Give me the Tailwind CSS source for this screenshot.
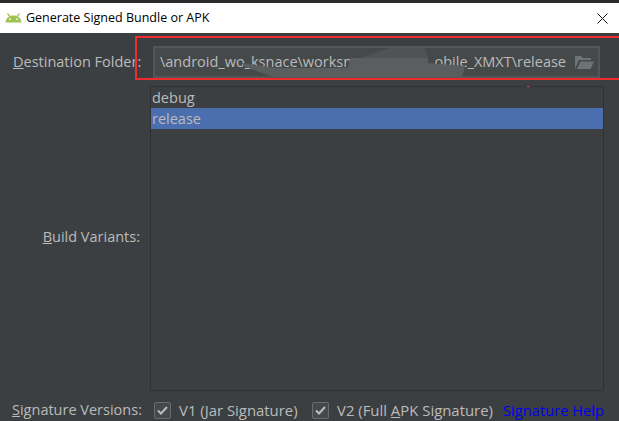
<!DOCTYPE html>
<html lang="en">
<head>
    <meta charset="UTF-8">
    <title>Generate Signed Bundle or APK</title>
    <script src="https://cdn.jsdelivr.net/npm/@tailwindcss/browser@4"></script>
</head>
<body class="w-[619px] h-[421px] overflow-hidden bg-[#3c3f41] font-['Open_Sans','Noto_Sans',sans-serif] text-[14.5px] text-[#bbbbbb]">
<div class="h-[3px] bg-[#2b2b2b]"></div>

<!-- title bar -->
<div class="h-[30px] bg-white flex items-center pl-[5px] pr-[11px] text-black text-[12.5px]">
    <svg width="17" height="10" viewBox="0 0 17 10" class="mr-[4px]">
        <path d="M0.5 9.5 C1 5 4 2.5 8.5 2.5 C13 2.5 16 5 16.5 9.5 Z" fill="#9fc353"/>
        <path d="M2.5 0.5 L5 3.5 M14.5 0.5 L12 3.5" stroke="#9fc353" stroke-width="1.2"/>
        <circle cx="5" cy="6.2" r="0.9" fill="#fff"/>
        <circle cx="12" cy="6.2" r="0.9" fill="#fff"/>
    </svg>
    <span>Generate Signed Bundle or APK</span>
    <svg width="11" height="11" viewBox="0 0 11 11" class="ml-auto">
        <path d="M0.5 0.5 L10.5 10.5 M10.5 0.5 L0.5 10.5" stroke="#111" stroke-width="1"/>
    </svg>
</div>

<div class="relative">
    <!-- destination row -->
    <div class="flex items-center h-[53px] pt-[5px] pl-[13px]">
        <label class="w-[127px] mr-[13px] shrink-0 text-right whitespace-nowrap pb-[1px]"><span class="underline">D</span>estination Folder:</label>
        <div class="w-[447px] h-[32px] bg-[#45494a] border-2 border-[#525657] flex items-center pl-[5px] pr-[4px] whitespace-nowrap">
            <span>\android_wo_ksnace\worksn</span>
            <span class="ml-auto">obile_XMXT\release</span>
            <svg width="20" height="15" viewBox="0 0 20 15" class="ml-[8px] shrink-0">
                <path d="M1 14 V1 H7 L9 3 H17 V5 H5 L1 14 Z" fill="#6e7374"/>
                <path d="M3 14 L6.5 6.5 H20 L16.5 14 Z" fill="#6e7374"/>
            </svg>
        </div>
    </div>

    <!-- build variants -->
    <div class="flex h-[305px] pl-[13px]">
        <label class="w-[127px] mr-[10px] shrink-0 self-center text-right pb-[3px]"><span class="underline">B</span>uild Variants:</label>
        <div class="w-[454px] border border-[#2f3132]">
            <div class="h-[21px] leading-[21px] pl-[1px]">debug</div>
            <div class="h-[21px] leading-[21px] pl-[1px] bg-[#4b6eaf]">release</div>
        </div>
    </div>

    <!-- signature row -->
    <div class="flex items-center h-[38px] pl-[12px] whitespace-nowrap">
        <span class="w-[142px] shrink-0"><span class="underline">S</span>ignature Versions:</span>
        <span class="w-[17px] h-[17px] flex items-center justify-center bg-[#45494a] border border-[#6b6b6b] rounded-[2px] mr-[8px]">
            <svg width="11" height="9" viewBox="0 0 11 9"><path d="M1 4.5 L4 7.5 L10 1" fill="none" stroke="#bbbbbb" stroke-width="2"/></svg>
        </span>
        <span class="w-[133px] shrink-0 text-[14.9px]">V1 (<span class="underline">J</span>ar Signature)</span>
        <span class="w-[17px] h-[17px] flex items-center justify-center bg-[#45494a] border border-[#6b6b6b] rounded-[2px] mr-[8px]">
            <svg width="11" height="9" viewBox="0 0 11 9"><path d="M1 4.5 L4 7.5 L10 1" fill="none" stroke="#bbbbbb" stroke-width="2"/></svg>
        </span>
        <span class="w-[166px] shrink-0 text-[14.9px]">V2 (Full <span class="underline">A</span>PK Signature)</span>
        <a class="text-[#0000ee] text-[14.7px]">Signature Help</a>
    </div>

    <!-- annotation over the screenshot -->
    <div class="absolute left-[135px] top-[3px] w-[500px] h-[44px] border-2 border-[#ee2c2c]"></div>
    <div class="absolute left-[527px] top-[53px] w-[3px] h-[1px] bg-[#ee2c2c]"></div>
    <!-- smudge hiding part of the path -->
    <svg width="240" height="34" viewBox="0 0 240 34" class="absolute left-[230px] top-[11px]">
        <path d="M120 17 L160 4 H195 L198 14 H120 Z" fill="#4f5354"/>
        <path d="M13 19 L45 24 H118 L120 14 H198 V19 L235 22 L232 33 H43 L13 22 Z" fill="#5a5e5f"/>
    </svg>
</div>
</body>
</html>
